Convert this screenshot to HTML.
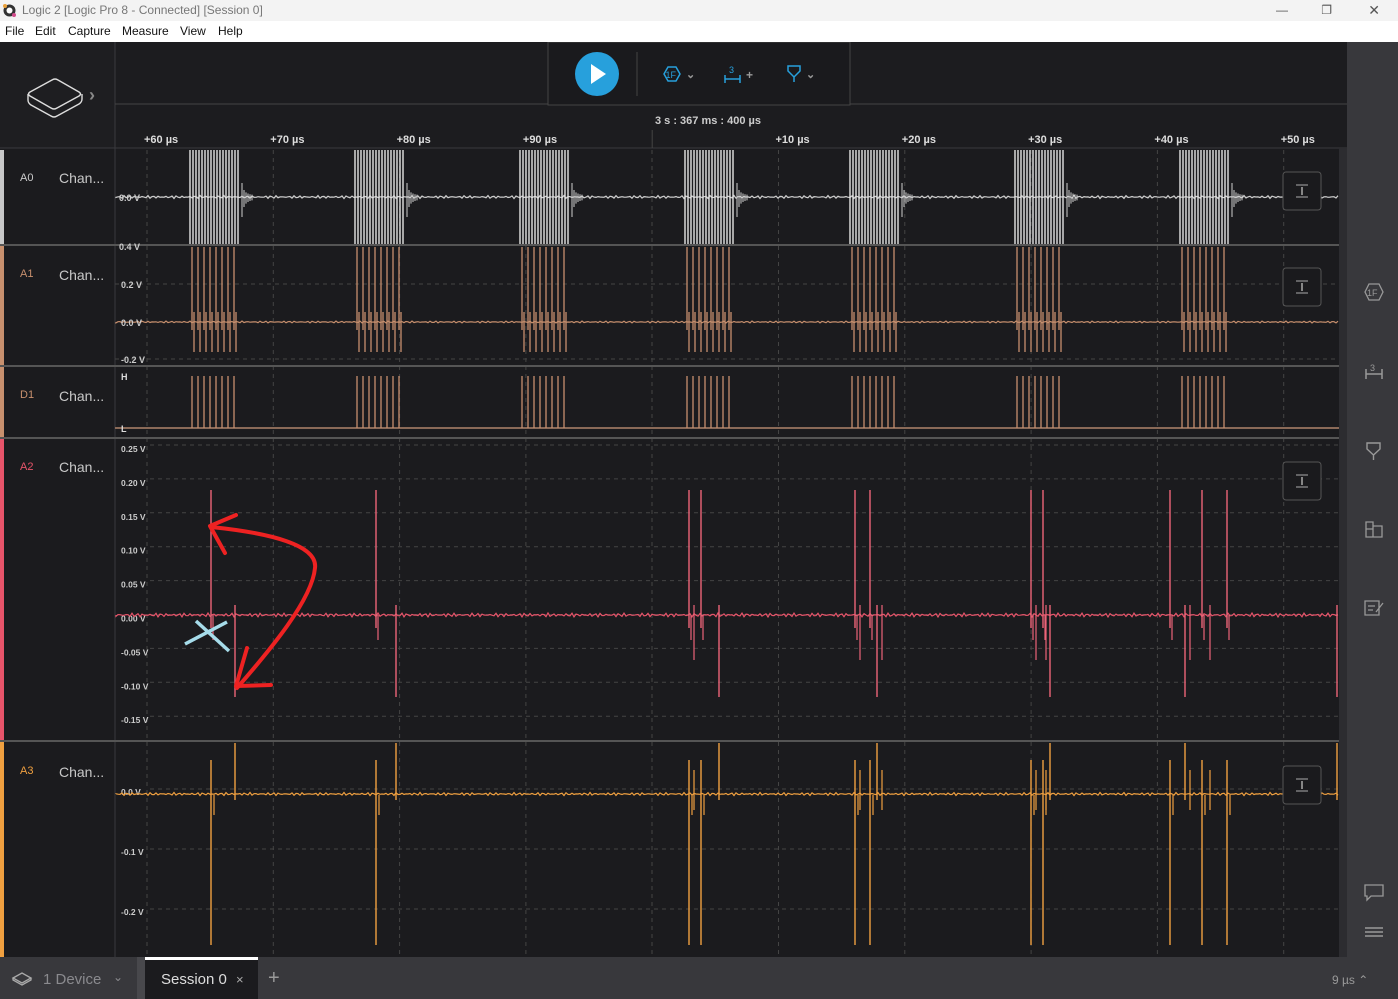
<!DOCTYPE html>
<html><head><meta charset="utf-8">
<style>
*{margin:0;padding:0;box-sizing:border-box}
body{width:1398px;height:999px;overflow:hidden;background:#1b1b1e;font-family:"Liberation Sans",sans-serif;position:relative}
.abs{position:absolute}
#title{left:0;top:0;width:1398px;height:21px;background:#f3f3f3;color:#777;font-size:12px;line-height:21px;padding-left:22px}
#menu{left:0;top:21px;width:1398px;height:21px;background:#fff;color:#111;font-size:12px;line-height:21px}
#menu span{position:absolute;top:0}
.lbl{color:#c8c8c8;font-size:14px}
.ch{font-size:11px}
</style></head><body>
<div id="title" class="abs">Logic 2 [Logic Pro 8 - Connected] [Session 0]
<span class="abs" style="right:110px;top:0;color:#555">—</span><span class="abs" style="right:66px;top:0;color:#555">❐</span><span class="abs" style="right:18px;top:0;color:#555;font-size:14px">✕</span></div>
<svg class="abs" style="left:3px;top:4px" width="13" height="13"><circle cx="6.5" cy="6.5" r="6" fill="#333"/><circle cx="6.5" cy="6.5" r="3" fill="#fff"/><circle cx="2" cy="2" r="2" fill="#e9a03a"/><circle cx="11" cy="11" r="2" fill="#d04a8a"/></svg>
<div id="menu" class="abs"><span style="left:5px">File</span><span style="left:35px">Edit</span><span style="left:68px">Capture</span><span style="left:122px">Measure</span><span style="left:180px">View</span><span style="left:218px">Help</span></div>
<svg class="abs" style="left:0;top:42px" width="1398" height="957" id="main"></svg>
<div class="abs" style="left:0;top:957px;width:1398px;height:42px;background:#38383c"></div>
<div class="abs" style="left:137px;top:957px;width:8px;height:42px;background:#48484c"></div>
<div class="abs" style="left:145px;top:957px;width:113px;height:42px;background:#1b1b1e;border-top:3px solid #fff"></div>
<div class="abs" style="left:43px;top:971px;color:#8a8a8e;font-size:15px">1 Device</div>
<div class="abs" style="left:113px;top:970px;color:#8a8a8e;font-size:12px">⌄</div>
<div class="abs" style="left:161px;top:971px;color:#ddd;font-size:15px">Session 0</div>
<div class="abs" style="left:236px;top:972px;color:#aaa;font-size:13px">×</div>
<div class="abs" style="left:268px;top:967px;color:#999;font-size:20px">+</div>
<div class="abs" style="left:1332px;top:973px;color:#999;font-size:12px">9 µs ⌃</div>
<svg class="abs" style="left:11px;top:972px" width="22" height="14"><path d="M2 6 L11 1 L20 6 L11 11 Z M2 6 V8 L11 13 L20 8 V6" fill="none" stroke="#aaa" stroke-width="1.3"/></svg>
<div class="abs lbl ch" style="left:20px;top:172px;color:#ccc">A0</div>
<div class="abs lbl" style="left:59px;top:170px">Chan...</div>
<div class="abs lbl ch" style="left:20px;top:268px;color:#c8906e">A1</div>
<div class="abs lbl" style="left:59px;top:267px">Chan...</div>
<div class="abs lbl ch" style="left:20px;top:389px;color:#c8906e">D1</div>
<div class="abs lbl" style="left:59px;top:388px">Chan...</div>
<div class="abs lbl ch" style="left:20px;top:461px;color:#e8546a">A2</div>
<div class="abs lbl" style="left:59px;top:459px">Chan...</div>
<div class="abs lbl ch" style="left:20px;top:765px;color:#f0a040">A3</div>
<div class="abs lbl" style="left:59px;top:764px">Chan...</div>
<script>
const S=document.getElementById('main');let h='';
const Y=y=>y-42;
function L(x1,y1,x2,y2,c,w,d){h+=`<line x1="${x1}" y1="${Y(y1)}" x2="${x2}" y2="${Y(y2)}" stroke="${c}" stroke-width="${w||1}" ${d?`stroke-dasharray="${d}"`:''}/>`}
function R(x,y,w,hh,f,extra){h+=`<rect x="${x}" y="${Y(y)}" width="${w}" height="${hh}" fill="${f}" ${extra||''}/>`}
function T(x,y,t,c,s,a){h+=`<text x="${x}" y="${Y(y)}" fill="${c}" font-size="${s}" font-weight="bold" font-family="Liberation Sans" ${a?`text-anchor="${a}"`:''}>${t}</text>`}
function P(d,extra){h+=`<path transform="translate(0,-42)" d="${d}" ${extra}/>`}
R(0,42,1398,915,'#1b1b1e');
R(0,42,115,106,'#1e1e21');R(115,42,1232,106,'#1c1c1f');
L(0,148,1347,148,'#3a3a3e');L(115,42,115,957,'#3a3a3e');L(115,104,548,104,'#444');L(850,104,1347,104,'#444');
R(1347,42,51,915,'#38383c');R(1339,148,8,809,'#2c2c30');
R(548,42,302,63,'#1a1a1d','stroke="#444"');
h+=`<circle cx="597" cy="${Y(74)}" r="22" fill="#27a0dc"/><path d="M591 ${Y(64)} L606 ${Y(74)} L591 ${Y(84)} Z" fill="#fff"/>`;
L(637,52,637,96,'#444');
h+=`<path d="M664 ${Y(74)} l4 -7 h8 l4 7 l-4 7 h-8 z" fill="none" stroke="#27a0dc" stroke-width="1.5"/><text x="665.5" y="${Y(78)}" fill="#27a0dc" font-size="9" font-family="Liberation Sans">1F</text>`;
T(686,78,'⌄','#999',11);
h+=`<path d="M725 ${Y(75)} v8 M725 ${Y(79)} h15 M740 ${Y(75)} v8" stroke="#27a0dc" stroke-width="1.5" fill="none"/><text x="729" y="${Y(73)}" fill="#27a0dc" font-size="9" font-family="Liberation Sans">3</text>`;
T(746,79,'+','#999',12);
h+=`<path d="M788 ${Y(66)} h12 v5 l-6 6 l-6 -6 z M794 ${Y(77)} v5" stroke="#27a0dc" stroke-width="1.5" fill="none"/>`;
T(806,78,'⌄','#999',11);
T(708,124,'3 s : 367 ms : 400 µs','#ccc',11,'middle');
P('M30 92 Q27 94 30 96 L51 108 Q54 110 57 108 L79 96 Q82 94 79 92 L58 80 Q55 78 52 80 Z M28 94 V100 Q28 103 31 105 L51 116 Q54 118 57 116 L79 104 Q82 102 82 99 V94','fill="none" stroke="#ddd" stroke-width="1.4" stroke-linejoin="round"');
T(89,101,'›','#888',18);
const labs=['+60 µs','+70 µs','+80 µs','+90 µs','','+10 µs','+20 µs','+30 µs','+40 µs','+50 µs'];
for(let i=0;i<10;i++){const x=147+i*126.3;if(i==4){L(x,130,x,148,'#444')}else{T(x-3,143,labs[i],'#ddd',11);L(x,150,x,957,'#444',1,'4 4')}}
L(652,150,652,957,'#444',1,'4 4');
const rows=[[150,244,'#c8c8c8'],[246,365,'#c8906e'],[367,437,'#c8906e'],[439,740,'#e8546a'],[742,957,'#f0a040']];
rows.forEach(r=>{R(0,r[0],4,r[1]-r[0],r[2]);L(0,r[1]+1,1339,r[1]+1,'#555',2)});
function noisy(y0,c,amp,x0,x1,seed){let p=`M${x0} ${Y(y0)}`;for(let x=x0;x<=x1;x+=2){let n=Math.sin(x*1.7+seed)*Math.sin(x*0.37)*amp;p+=` L${x} ${(Y(y0)+n).toFixed(1)}`}h+=`<path d="${p}" stroke="${c}" fill="none" stroke-width="1.2"/>`}
const bursts=[190,355,520,685,850,1015,1180];
L(115,197,1339,197,'#555',1,'4 4');
noisy(197,'#cfcfcf',1.5,116,1339,1);
bursts.forEach(b=>{for(let x=b;x<b+50;x+=3)L(x,150,x,244,'#e4e4e4',1.4);for(let k=0;k<6;k++){L(b+52+k*2,197-14/(k+1),b+52+k*2,197+20/(k+1),'#cfcfcf')}});
T(119,201,'0.0 V','#ccc',9);
L(115,284,1339,284,'#444',1,'4 4');L(115,359,1339,359,'#444',1,'4 4');
noisy(322,'#c8906e',1,116,1339,2);
bursts.forEach(b=>{for(let x=b+2;x<b+48;x+=6){L(x,247,x,330,'#c8906e',1.3);L(x+2,312,x+2,352,'#c8906e',1.3)}});
T(119,250,'0.4 V','#ccc',9);T(121,288,'0.2 V','#ccc',9);T(121,326,'0.0 V','#ccc',9);T(121,363,'-0.2 V','#ccc',9);
L(115,428,1339,428,'#8a6a58',2);
bursts.forEach(b=>{for(let x=b+2;x<b+46;x+=6)L(x,376,x,428,'#c8906e',1.3)});
T(121,380,'H','#ddd',9);T(121,432,'L','#ddd',9);
const a2=['0.25 V','0.20 V','0.15 V','0.10 V','0.05 V','0.00 V','-0.05 V','-0.10 V','-0.15 V'];
a2.forEach((t,i)=>{const y=449+i*33.9;L(150,y-4,1339,y-4,'#444',1,'4 4');T(121,y+3,t,'#ccc',8.5)});
noisy(615,'#e8546a',2,116,1339,3);
const ups=[211,376,689,701,855,870,1031,1043,1170,1202,1227];
const dns=[235,396,719,877,1050,1185,1337];
const sm=[694,860,882,1036,1046,1210,1190];
ups.forEach(x=>{L(x,490,x,628,'#ec6478',1.4);L(x+2,615,x+2,640,'#ec6478',1.2)});
dns.forEach(x=>L(x,605,x,697,'#ec6478',1.4));
sm.forEach(x=>L(x,605,x,660,'#ec6478',1.2));
[[793,'0.0 V'],[853,'-0.1 V'],[913,'-0.2 V']].forEach(a=>{L(150,a[0]-4,1339,a[0]-4,'#444',1,'4 4');T(121,a[0]+2,a[1],'#ccc',8.5)});
noisy(794,'#f0a040',1.5,116,1339,4);
ups.forEach(x=>{L(x,760,x,945,'#f0a040',1.4);L(x+3,795,x+3,815,'#f0a040',1.2)});
dns.forEach(x=>L(x,743,x,800,'#f0a040',1.4));
sm.forEach(x=>L(x,770,x,810,'#f0a040',1.2));
[172,268,462,766].forEach(y=>{R(1283,y,38,38,'#1a1a1d','rx="3" stroke="#555"');L(1296,y+13,1308,y+13,'#aaa');L(1296,y+25,1308,y+25,'#aaa');L(1302,y+15,1302,y+23,'#aaa',1.5)});
P('M211 527 C270 533 318 545 315 568 C312 600 270 650 237 688','stroke="#ee2222" stroke-width="4" fill="none" stroke-linecap="round"');
P('M236 515 L210 526 L225 553','stroke="#ee2222" stroke-width="4" fill="none" stroke-linecap="round" stroke-linejoin="round"');
P('M247 648 L236 686 L271 685','stroke="#ee2222" stroke-width="4" fill="none" stroke-linecap="round" stroke-linejoin="round"');
L(185,644,227,622,'#a6dcea',3.5);L(196,621,229,651,'#a6dcea',3.5);
h+=`<path d="M1365 ${Y(292)} l4 -8 h10 l4 8 l-4 8 h-10 z" fill="none" stroke="#999" stroke-width="1.3"/><text x="1367" y="${Y(296)}" fill="#999" font-size="9" font-family="Liberation Sans">1F</text>`;
h+=`<path d="M1366 ${Y(369)} v10 M1366 ${Y(374)} h16 M1382 ${Y(369)} v10" stroke="#999" stroke-width="1.5" fill="none"/><text x="1370" y="${Y(371)}" fill="#999" font-size="9" font-family="Liberation Sans">3</text>`;
h+=`<path d="M1367 ${Y(443)} h13 v6 l-6.5 6 l-6.5 -6 z M1373.5 ${Y(455)} v5" stroke="#999" stroke-width="1.4" fill="none"/>`;
h+=`<path d="M1366 ${Y(522)} h7 v7 h-7 z M1373 ${Y(526)} h9 v11 h-9 z M1366 ${Y(529)} v8 h7" stroke="#999" stroke-width="1.3" fill="none"/>`;
h+=`<path d="M1365 ${Y(601)} h14 v14 h-14 z M1368 ${Y(606)} h7 M1368 ${Y(610)} h5 M1376 ${Y(612)} l7 -9" stroke="#999" stroke-width="1.3" fill="none"/>`;
h+=`<path d="M1365 ${Y(885)} h18 v11 h-12 l-4 4 v-4 h-2 z" stroke="#999" stroke-width="1.3" fill="none"/>`;
L(1365,928,1383,928,'#999',1.5);L(1365,932,1383,932,'#999',1.5);L(1365,936,1383,936,'#999',1.5);
S.innerHTML=h;
</script>
</body></html>
